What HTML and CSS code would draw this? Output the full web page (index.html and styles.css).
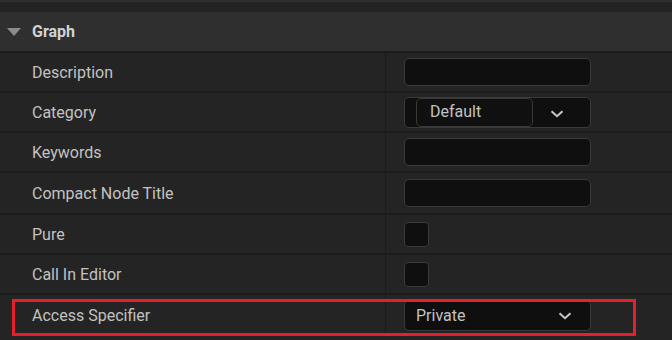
FILE: index.html
```html
<!DOCTYPE html>
<html>
<head>
<meta charset="utf-8">
<link rel="stylesheet" href="styles.css">
</head>
<body>
<div class="panel">
  <div class="topstrip"></div>
  <div class="header">
    <svg class="tri" width="14" height="8" viewBox="0 0 14 8"><path d="M0 0 H14 L7 8 Z" fill="#8c8c8c"/></svg>
    <span class="htitle">Graph</span>
  </div>
  <div class="rows">
    <div class="row">
      <div class="label">Description</div>
      <div class="value"><div class="input"></div></div>
    </div>
    <div class="row">
      <div class="label">Category</div>
      <div class="value">
        <div class="combo">
          <div class="combo-edit">Default</div>
          <div class="combo-arrow"><svg width="14" height="8" viewBox="0 0 14 8"><path d="M1.5 1.2 L7 6.2 L12.5 1.2" fill="none" stroke="#c8c8c8" stroke-width="2"/></svg></div>
        </div>
      </div>
    </div>
    <div class="row">
      <div class="label">Keywords</div>
      <div class="value"><div class="input"></div></div>
    </div>
    <div class="row tall">
      <div class="label">Compact Node Title</div>
      <div class="value"><div class="input"></div></div>
    </div>
    <div class="row">
      <div class="label">Pure</div>
      <div class="value"><div class="check"></div></div>
    </div>
    <div class="row">
      <div class="label">Call In Editor</div>
      <div class="value"><div class="check"></div></div>
    </div>
    <div class="row last">
      <div class="label">Access Specifier</div>
      <div class="value">
        <div class="select">
          <span>Private</span>
          <svg width="14" height="8" viewBox="0 0 14 8"><path d="M1.5 1.2 L7 6.2 L12.5 1.2" fill="none" stroke="#c8c8c8" stroke-width="2"/></svg>
        </div>
      </div>
      <div class="highlight"></div>
    </div>
  </div>
</div>
</body>
</html>
```

FILE: styles.css
```css
html, body {
  margin: 0;
  padding: 0;
  background: #242424;
}
body {
  width: 672px;
  height: 340px;
  overflow: hidden;
  font-family: Roboto, "Liberation Sans", sans-serif;
}
.panel {
  display: flex;
  flex-direction: column;
}
.topstrip {
  height: 10px;
  border-top: 2px solid #2e2e2e;
  background: #232323;
}
.header {
  height: 39px;
  background: #2f2f2f;
  border-bottom: 2px solid #1b1b1b;
  display: flex;
  align-items: center;
  padding-left: 7px;
}
.tri {
  margin-right: 11px;
  margin-top: 1px;
}
.htitle {
  font-size: 16px;
  font-weight: 700;
  color: #d2d2d2;
}
.rows {
  display: flex;
  flex-direction: column;
}
.row {
  position: relative;
  display: grid;
  grid-template-columns: 385px 1fr;
  height: 38px;
  border-bottom: 2px solid #1c1c1c;
  background: #242424;
}
.row.tall {
  height: 40px;
}
.row.last {
  border-bottom: none;
  height: 47px;
}
.label {
  display: flex;
  align-items: center;
  padding-left: 32px;
  font-size: 16px;
  color: #c2c2c2;
}
.row.last .label, .row.last .value {
  height: 40px;
}
.value {
  border-left: 1px solid #1b1b1b;
  display: flex;
  align-items: center;
  padding-left: 18px;
}
.input {
  width: 185px;
  height: 26px;
  background: #0f0f0f;
  border: 1px solid #3a3a3a;
  border-radius: 5px;
}
.combo {
  height: 29px;
  background: #0f0f0f;
  border: 1px solid #3a3a3a;
  border-radius: 5px;
  display: flex;
  align-items: center;
  padding-left: 11px;
  box-sizing: content-box;
  width: 174px;
}
.combo-edit {
  width: 102px;
  height: 25px;
  border: 1px solid #3a3a3a;
  border-radius: 5px;
  background: #101010;
  color: #c2c2c2;
  font-size: 16px;
  display: flex;
  align-items: center;
  padding-left: 13px;
  padding-bottom: 2px;
}
.combo-arrow {
  flex: 1;
  display: flex;
  justify-content: center;
  align-items: center;
  padding-top: 3px;
  padding-right: 10px;
}
.check {
  width: 23px;
  height: 23px;
  background: #0f0f0f;
  border: 1px solid #3a3a3a;
  border-radius: 4px;
}
.select {
  height: 29px;
  background: #0f0f0f;
  border: 1px solid #3a3a3a;
  border-radius: 5px;
  display: flex;
  align-items: center;
  justify-content: space-between;
  padding-left: 11px;
  padding-right: 18px;
  box-sizing: content-box;
  width: 156px;
  color: #c2c2c2;
  font-size: 16px;
}
.select svg {
  margin-top: 1px;
}
.highlight {
  position: absolute;
  left: 12px;
  top: 4px;
  width: 618px;
  height: 31px;
  border: 3px solid #e3202b;
}
```
